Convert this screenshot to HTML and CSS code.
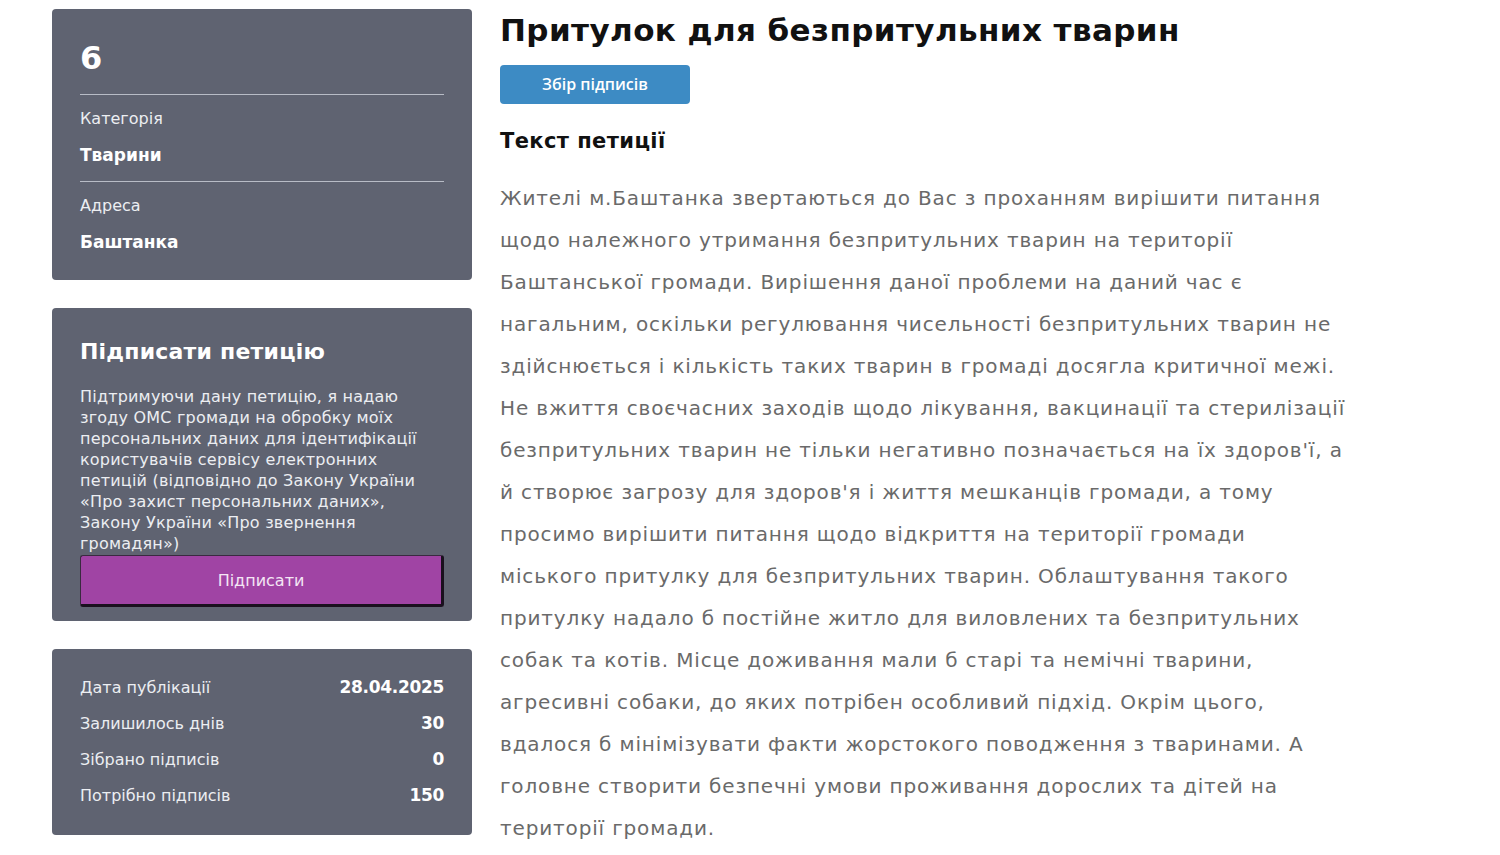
FILE: index.html
```html
<!DOCTYPE html>
<html lang="uk">
<head>
<meta charset="utf-8">
<title>Притулок для безпритульних тварин</title>
<link rel="stylesheet" href="styles.css">
</head>
<body>
<div class="page">
  <aside class="side">
    <section class="panel info">
      <div class="num">6</div>
      <div class="field field-first">
        <div class="label">Категорія</div>
        <div class="value">Тварини</div>
      </div>
      <div class="field">
        <div class="label">Адреса</div>
        <div class="value">Баштанка</div>
      </div>
    </section>
    <section class="panel sign">
      <h2 class="sign-title">Підписати петицію</h2>
      <p class="sign-text">Підтримуючи дану петицію, я надаю згоду ОМС громади на обробку моїх персональних даних для ідентифікації користувачів сервісу електронних петицій (відповідно до Закону України «Про захист персональних даних», Закону України «Про звернення громадян»)</p>
      <button class="sign-btn" type="button">Підписати</button>
    </section>
    <section class="panel stats">
      <div class="row"><span class="k">Дата публікації</span><span class="v">28.04.2025</span></div>
      <div class="row"><span class="k">Залишилось днів</span><span class="v">30</span></div>
      <div class="row"><span class="k">Зібрано підписів</span><span class="v">0</span></div>
      <div class="row"><span class="k">Потрібно підписів</span><span class="v">150</span></div>
    </section>
  </aside>
  <main class="content">
    <h1 class="title">Притулок для безпритульних тварин</h1>
    <span class="status">Збір підписів</span>
    <h3 class="subtitle">Текст петиції</h3>
    <p class="body-text">Жителі м.Баштанка звертаються до Вас з проханням вирішити питання щодо належного утримання безпритульних тварин на території Баштанської громади. Вирішення даної проблеми на даний час є нагальним, оскільки регулювання чисельності безпритульних тварин не здійснюється і кількість таких тварин в громаді досягла критичної межі. Не вжиття своєчасних заходів щодо лікування, вакцинації та стерилізації безпритульних тварин не тільки негативно позначається на їх здоров'ї, а й створює загрозу для здоров'я і життя мешканців громади, а тому просимо вирішити питання щодо відкриття на території громади міського притулку для безпритульних тварин. Облаштування такого притулку надало б постійне житло для виловлених та безпритульних собак та котів. Місце доживання мали б старі та немічні тварини, агресивні собаки, до яких потрібен особливий підхід. Окрім цього, вдалося б мінімізувати факти жорстокого поводження з тваринами. А головне створити безпечні умови проживання дорослих та дітей на території громади.</p>
  </main>
</div>
</body>
</html>
```
FILE: styles.css
```css
* { box-sizing: border-box; }
html, body { margin: 0; padding: 0; background: #fff; }
body { font-family: "DejaVu Sans", "Open Sans", sans-serif; color: #111; }

.page {
  display: flex;
  gap: 28px;
  padding: 9px 0 0 52px;
}

.side {
  width: 420px;
  flex: none;
  display: flex;
  flex-direction: column;
  gap: 28px;
}

.panel {
  background: #5f6371;
  border-radius: 4px;
  color: #fff;
  padding: 0 28px;
}

.info { padding-top: 30px; padding-bottom: 11px; }
.num { font-size: 32px; font-weight: bold; line-height: 38px; padding-bottom: 17px; border-bottom: 1px solid #b8bcc6; }
.field { padding: 14px 0 17px; }
.field-first { padding-bottom: 16px; border-bottom: 1px solid #b8bcc6; }
.label { font-size: 16px; line-height: 20px; color: #eceef2; }
.value { font-size: 17px; font-weight: bold; line-height: 20px; margin-top: 16px; }

.sign { padding-top: 29px; padding-bottom: 14px; }
.sign-title { margin: 0; font-size: 22px; font-weight: bold; line-height: 30px; letter-spacing: 0.2px; }
.sign-text { margin: 19px 0 0; max-width: 350px; font-size: 16px; letter-spacing: 0.2px; line-height: 21px; color: #eceef2; }
.sign-btn {
  display: block;
  width: 100%;
  height: 52px;
  margin-top: 1px;
  background: #a044a4;
  color: #f4e6f4;
  font-family: inherit;
  font-size: 16px;
  border-radius: 3px;
  border-style: solid;
  border-width: 1px 3px 3px 1px;
  border-color: #3a2a40 #1a101e #1a101e #3a2a40;
  cursor: pointer;
}

.stats { padding-top: 20px; padding-bottom: 22px; }
.row { display: flex; justify-content: space-between; align-items: center; height: 36px; font-size: 16px; }
.k { color: #eceef2; }
.v { font-weight: bold; font-size: 17px; letter-spacing: -0.3px; }

.content { width: 870px; flex: none; }
.title { margin: 1px 0 0; font-size: 31px; line-height: 40px; font-weight: bold; color: #111; letter-spacing: 0.4px; }
.status {
  display: inline-block;
  margin-top: 15px;
  width: 190px;
  height: 39px;
  line-height: 39px;
  text-align: center;
  background: #3d8bc4;
  color: #fff;
  font-family: "Open Sans", sans-serif;
  font-weight: 600;
  font-size: 16px;
  border-radius: 4px;
}
.subtitle { margin: 22px 0 0; font-size: 21px; line-height: 30px; font-weight: bold; color: #111; letter-spacing: 0.4px; }
.body-text {
  margin: 21px 0 0;
  width: 847px;
  font-size: 20px;
  letter-spacing: 0.85px;
  line-height: 42px;
  color: #6a6a6a;
}
```
